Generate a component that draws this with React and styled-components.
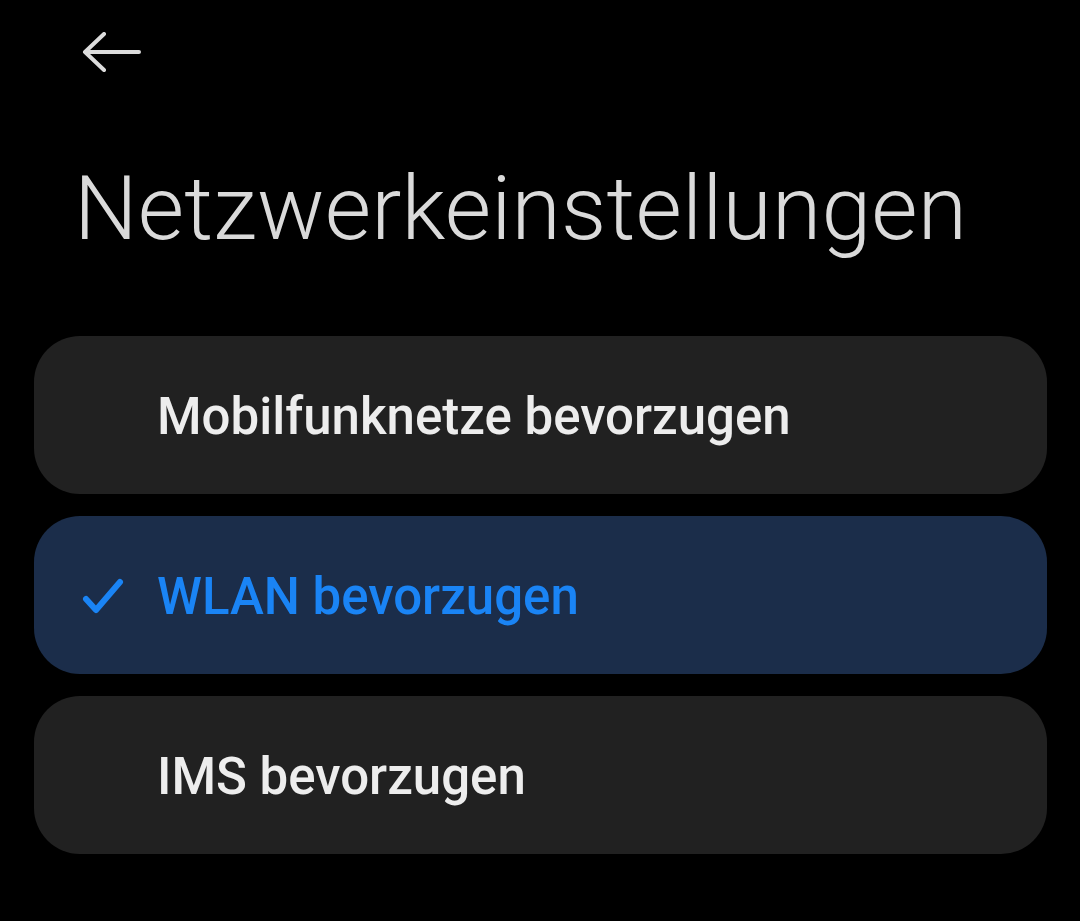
import React from 'react';
import styled, { createGlobalStyle } from 'styled-components';

const GlobalStyle = createGlobalStyle`
  html, body {
    margin: 0;
    background: #000;
  }
  body {
    font-family: Roboto, 'Noto Sans', sans-serif;
  }
`;

const options = [
  { id: 'mobile', label: 'Mobilfunknetze bevorzugen' },
  { id: 'wlan', label: 'WLAN bevorzugen' },
  { id: 'ims', label: 'IMS bevorzugen' },
];

const App = () => {
  const selected = 'wlan';

  return (
    <Screen>
      <GlobalStyle />
      <TopBar>
        <BackButton aria-label='Zurück'>
          <svg width='60' height='40' viewBox='0 0 60 40' fill='none'>
            <path
              d='M57 20H3M22 2L3 20L22 38'
              stroke='#dcdcdc'
              strokeWidth='4'
              strokeLinecap='round'
              strokeLinejoin='round'
            />
          </svg>
        </BackButton>
      </TopBar>
      <Title>Netzwerkeinstellungen</Title>
      <OptionList>
        {options.map((o) => (
          <Option key={o.id} active={o.id === selected ? 1 : 0}>
            <CheckSlot>
              {o.id === selected && (
                <svg width='42' height='36' viewBox='0 0 42 36' fill='none'>
                  <path
                    d='M4 21L14 32L38 4'
                    stroke='#1a84f5'
                    strokeWidth='6'
                    strokeLinecap='round'
                    strokeLinejoin='round'
                  />
                </svg>
              )}
            </CheckSlot>
            <Label active={o.id === selected ? 1 : 0}>{o.label}</Label>
          </Option>
        ))}
      </OptionList>
    </Screen>
  );
};

export default App;

const Screen = styled.div`
  width: 1080px;
  height: 921px;
  background: #000;
  box-sizing: border-box;
  padding: 0 33px 0 34px;
  overflow: hidden;
`;

const TopBar = styled.div`
  height: 106px;
  display: flex;
  align-items: center;
  padding-left: 48px;
`;

const BackButton = styled.div`
  display: flex;
  margin-top: -2px;
`;

const Title = styled.h1`
  margin: 0;
  padding-left: 40px;
  height: 230px;
  font-family: Roboto, 'Noto Sans', sans-serif;
  font-weight: 300;
  font-size: 89.5px;
  line-height: 206px;
  color: #dadada;
  letter-spacing: 0.2px;
`;

const OptionList = styled.div`
  display: flex;
  flex-direction: column;
  gap: 22px;
`;

const Option = styled.div`
  height: 158px;
  border-radius: 46px;
  background: ${(p) => (p.active ? '#1b2d4a' : '#212121')};
  display: flex;
  align-items: center;
`;

const CheckSlot = styled.div`
  width: 123px;
  display: flex;
  justify-content: flex-end;
  box-sizing: border-box;
  padding-right: 33px;
  margin-top: 2px;
`;

const Label = styled.span`
  font-family: Roboto, 'Noto Sans', sans-serif;
  font-weight: 500;
  font-size: 51px;
  color: ${(p) => (p.active ? '#1a84f5' : '#ededed')};
  margin-top: 3px;
`;
